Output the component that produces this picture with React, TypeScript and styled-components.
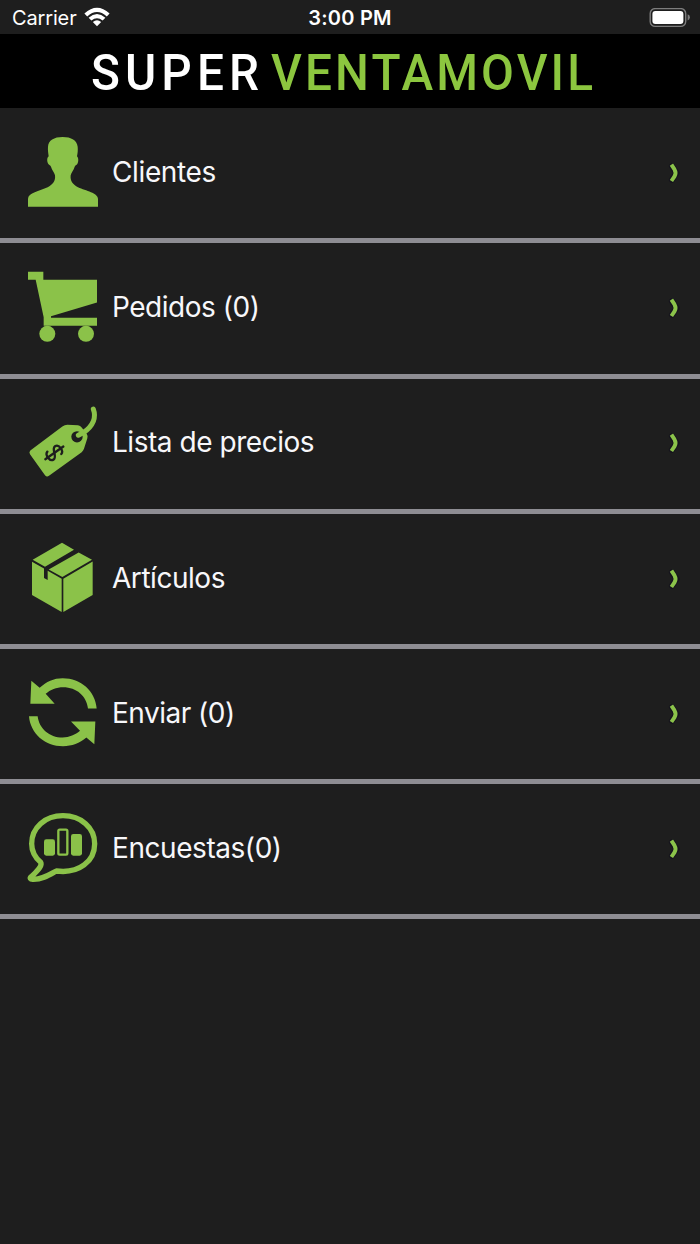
import React from "react";
import styled, { createGlobalStyle } from "styled-components";

const GREEN = "#8bc34a";
const ICON_GREEN = "#8bc249";
const DARK = "#1e1e1e";

const GlobalStyle = createGlobalStyle`
  body { margin: 0; background: ${DARK}; }
`;

const Screen = styled.div`
  width: 700px;
  height: 1244px;
  overflow: hidden;
  background: ${DARK};
  color: #fff;
  font-family: Inter, "Liberation Sans", sans-serif;
`;

const StatusBar = styled.header`
  box-sizing: border-box;
  display: grid;
  grid-template-columns: 1fr auto 1fr;
  align-items: center;
  height: 34px;
  padding: 1px 9px 0 12px;
  font-size: 20px;
`;

const Carrier = styled.div`
  display: flex;
  align-items: center;
  gap: 7px;
  letter-spacing: -0.15px;
  svg { margin-top: -1px; }
`;

const Clock = styled.time`
  font-weight: 600;
  letter-spacing: 0.2px;
  margin-right: 3px;
`;

const BatterySlot = styled.div`
  display: flex;
  justify-content: flex-end;
`;

const Brand = styled.div`
  height: 74px;
  background: #000;
  svg { display: block; }
`;

const Menu = styled.nav`
  display: flex;
  flex-direction: column;
  padding-top: 0.2px;
`;

const Row = styled.a`
  display: grid;
  grid-template-columns: 70px 1fr auto;
  column-gap: 14px;
  box-sizing: border-box;
  height: 135.2px;
  padding: 28.8px 18px 0 28px;
  border-bottom: 5px solid #8e8d93;
  align-items: start;
`;

const Label = styled.span<{ $spacing: number }>`
  line-height: 70px;
  font-size: 28px;
  color: #f7f7fa;
  letter-spacing: ${(p) => p.$spacing}px;
  white-space: nowrap;
`;

const Chevron = styled.svg`
  margin-top: 23px;
`;

const icons = {
  person: {
    top: 51,
    art: (
      <path d="M188 51C162 51 145 61 144 80C143 91 145 99 146 109C140 113 141 126 145 132C148 136 151 135 153 140C156 151 163 157 165 166C167 184 158 194 143 202C119 213 84 219 84 237V260H294V237C294 219 258 213 234 202C219 194 210 184 212 166C214 157 221 151 224 140C226 135 229 136 232 132C236 126 236 113 231 109C233 99 234 91 233 80C231 61 214 51 188 51Z" />
    ),
  },
  cart: {
    top: 51.6,
    art: (
      <>
        <path d="M84 51H130V75H291V143L153 184V189H291V213H131V187L107 75H84Z" />
        <circle cx="142" cy="237" r="24" />
        <circle cx="258" cy="237" r="24" />
      </>
    ),
  },
  tag: {
    top: 36.4,
    art: (
      <>
        <path d="M91 167L187 95Q194 90 202 90L234 91Q241 92 245 98L260 117Q264 123 262 130L252 162Q250 168 245 172L147 243Q140 248 135 241L90 178Q86 172 91 167Z" />
        <circle cx="231" cy="126" r="17" fill={DARK} />
        <path d="M280 43Q287 62 280 79Q272 99 250 113L235 121" fill="none" stroke={ICON_GREEN} strokeWidth="15" strokeLinecap="round" />
        <g fill="none" stroke={DARK} strokeWidth="7" strokeLinecap="round" transform="translate(163 174) rotate(55)">
          <path d="M15 -15C12 -27 -15 -27 -15 -13C-15 2 15 -2 15 13C15 27 -12 27 -15 15" />
          <path d="M0 -33V33" />
        </g>
      </>
    ),
  },
  box: {
    top: 37.8,
    art: (
      <path d="M186 37L222 58L135 109L98 88ZM236 66L276 88L187 140L146 117ZM96 94L132 114V143L143 149V121L185 145V245L96 194ZM278 93V194L190 245V145Z" />
    ),
  },
  sync: {
    top: 38.4,
    art: (
      <>
        <path d="M94 47L119 68C139 49 161 39 188 39C243 39 286 77 290 130H264C260 92 229 66 190 66C169 66 151 73 137 86L164 116H91Z" />
        <path d="M87 153H113C117 189 148 217 188 217C208 217 226 209 240 197L213 169H286L283 237L259 217C239 234 216 243 189 243C134 243 91 204 87 153Z" />
      </>
    ),
  },
  survey: {
    top: 39,
    art: (
      <>
        <path d="M189 47C135 47 95 83 95 131C95 153 105 172 122 187C127 196 118 207 94 230C88 235 91 238 98 238C127 239 149 224 169 213C238 222 284 183 284 131C284 83 243 47 189 47Z" fill="none" stroke={ICON_GREEN} strokeWidth="16" strokeLinejoin="round" />
        <rect x="132" y="118" width="33" height="49" rx="7" />
        <rect x="213" y="102" width="33" height="65" rx="7" />
        <rect x="175" y="89" width="27" height="75" rx="4" fill="none" stroke={ICON_GREEN} strokeWidth="7" />
      </>
    ),
  },
};

type IconName = keyof typeof icons;

const MenuIcon = ({ name }: { name: IconName }) => (
  <svg width="70" height="70" viewBox={`84 ${icons[name].top} 210 210`} fill={ICON_GREEN} overflow="visible" aria-hidden="true">
    {icons[name].art}
  </svg>
);

const items: { icon: IconName; label: string; spacing: number }[] = [
  { icon: "person", label: "Clientes", spacing: -0.38 },
  { icon: "cart", label: "Pedidos (0)", spacing: -0.47 },
  { icon: "tag", label: "Lista de precios", spacing: -0.46 },
  { icon: "box", label: "Artículos", spacing: -0.46 },
  { icon: "sync", label: "Enviar (0)", spacing: -0.5 },
  { icon: "survey", label: "Encuestas(0)", spacing: -0.44 },
];

export default function App() {
  return (
    <Screen>
      <GlobalStyle />
      <StatusBar>
        <Carrier>
          Carrier
          <svg width="26" height="20" viewBox="0 0 26 20" fill="#fff">
            <path d="M0.4 6.6Q13 -5 25.6 6.6L22.8 9.4Q13 0.6 3.2 9.4Z" />
            <path d="M4.6 10.8Q13 3.4 21.4 10.8L18.6 13.6Q13 8.9 7.4 13.6Z" />
            <path d="M8.8 15Q13 11.4 17.2 15L13 19.2Z" />
          </svg>
        </Carrier>
        <Clock>3:00 PM</Clock>
        <BatterySlot>
          <svg width="42" height="20" viewBox="0 0 42 20">
            <rect x="1.2" y="0.6" width="35.5" height="17.8" rx="5" fill="none" stroke="#7d7d7d" strokeWidth="1.4" />
            <rect x="3.4" y="2.9" width="31" height="13" rx="3" fill="#fff" />
            <path d="M38.6 6.3Q40.9 7 40.9 9.3Q40.9 11.7 38.6 12.4Z" fill="#7d7d7d" />
          </svg>
        </BatterySlot>
      </StatusBar>
      <Brand>
        <svg width="700" height="74" fontFamily="Roboto, sans-serif" fontSize="50.3" fontWeight="500">
          <text transform="translate(91 55.6) scale(0.95 1)" fill="#fff" textLength="177">SUPER</text>
          <text transform="translate(271 55.6) scale(0.95 1)" fill="#8cc63f" textLength="339">VENTAMOVIL</text>
        </svg>
      </Brand>
      <Menu>
        {items.map((item) => (
          <Row key={item.label}>
            <MenuIcon name={item.icon} />
            <Label $spacing={item.spacing}>{item.label}</Label>
            <Chevron width="14" height="26" viewBox="0 0 14 26" fill="none">
              <path d="M4 6.2L8.6 13L4 19.8" stroke="#15131d" strokeWidth="6" strokeLinejoin="round" strokeLinecap="round" />
              <path d="M3.4 4.6L6.5 9.4Q8.6 12.9 6.5 16.4L3.4 21" stroke={GREEN} strokeWidth="3.9" />
            </Chevron>
          </Row>
        ))}
      </Menu>
    </Screen>
  );
}
